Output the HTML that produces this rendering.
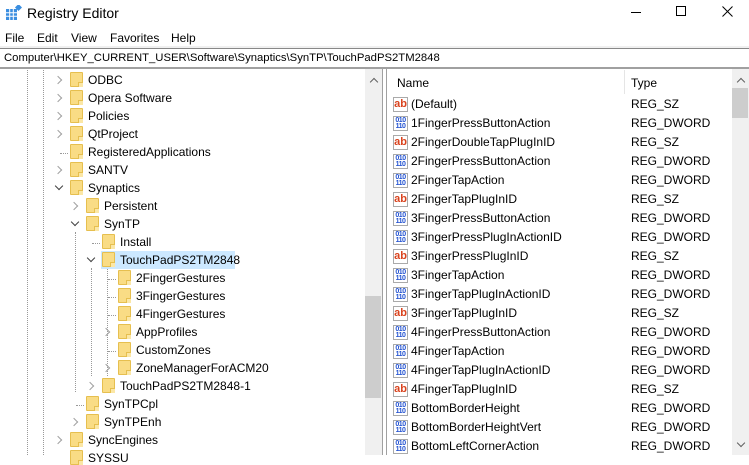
<!DOCTYPE html>
<html><head><style>
*{margin:0;padding:0;box-sizing:border-box}
body{width:749px;height:455px;overflow:hidden;background:#fff;font-family:"Liberation Sans",sans-serif;font-size:12px;color:#000;position:relative}
.a{position:absolute;white-space:nowrap}
.f{position:absolute;width:13px;height:15px;background:#f9dc85;border:1px solid #e6bf4f;border-radius:1px}
.f:after{content:"";position:absolute;right:-1px;bottom:-1px;width:4px;height:4px;border-left:1px solid #e6bf4f;border-top:1px solid #e6bf4f;background:#fbe7a6}
.ar{position:absolute;width:6px;height:6px;border-right:1px solid #a0a0a0;border-bottom:1px solid #a0a0a0;transform:rotate(-45deg)}
.dn{transform:rotate(45deg);border-color:#404040}
.vl{position:absolute;width:0;border-left:1px dotted #999}
.hl{position:absolute;height:0;border-top:1px dotted #999}
.ic{position:absolute;width:15px;height:15px;border:1px solid #aaa;background:#fff;font-size:9px;font-weight:bold;line-height:12px;text-align:center}
.ab{color:#d9431e;font-size:11px}
.dw{color:#2050d0;font-size:7px;line-height:6px;letter-spacing:-0.5px;padding-top:1px}
.r{margin-top:1px}
</style></head><body>
<svg class="a" style="left:6px;top:5px" width="16" height="16"><rect x="0" y="4" width="11" height="11" fill="#3a8ee0"/><path d="M0 7.7H11M0 11.3H11M3.7 4V15M7.3 4V15" stroke="#fff" stroke-width="1"/><rect x="10" y="0" width="5" height="5" fill="#3a8ee0" transform="rotate(45 12.5 2.5)"/></svg>
<div class="a" style="left:27px;top:5px;font-size:14px">Registry Editor</div>
<div class="a" style="left:631px;top:12px;width:10px;border-top:1px solid #000"></div>
<div class="a" style="left:676px;top:6px;width:10px;height:10px;border:1px solid #000"></div>
<svg class="a" style="left:722px;top:6px" width="11" height="11"><path d="M0.5 0.5L10.5 10.5M10.5 0.5L0.5 10.5" stroke="#000" stroke-width="1"/></svg>
<div class="a" style="left:5px;top:31px">File</div>
<div class="a" style="left:37px;top:31px">Edit</div>
<div class="a" style="left:71px;top:31px">View</div>
<div class="a" style="left:110px;top:31px">Favorites</div>
<div class="a" style="left:171px;top:31px">Help</div>
<div class="a" style="left:0;top:46px;width:749px;height:3px;background:#f0f0f0;border-bottom:1px solid #888"></div>
<div class="a" style="left:4px;top:52px;font-size:11.3px">Computer\HKEY_CURRENT_USER\Software\Synaptics\SynTP\TouchPadPS2TM2848</div>
<div class="a" style="left:0;top:67px;width:749px;height:2px;background:#a0a0a0"></div>
<div class="vl" style="left:27px;top:70px;height:385px"></div>
<div class="vl" style="left:43px;top:70px;height:385px"></div>
<div class="vl" style="left:75px;top:232px;height:160px"></div>
<div class="vl" style="left:91px;top:268px;height:108px"></div>
<div class="vl" style="left:107px;top:268px;height:108px"></div>
<div class="hl" style="left:60px;top:153px;width:8px"></div>
<div class="hl" style="left:92px;top:243px;width:8px"></div>
<div class="hl" style="left:76px;top:405px;width:8px"></div>
<div class="hl" style="left:108px;top:279px;width:8px"></div>
<div class="hl" style="left:108px;top:297px;width:8px"></div>
<div class="hl" style="left:108px;top:315px;width:8px"></div>
<div class="hl" style="left:108px;top:351px;width:8px"></div>
<div class="a" style="left:101px;top:251px;width:134px;height:18px;background:#cce8ff"></div>
<div style="position:absolute;left:0;top:1px;width:365px;height:455px">
<div class="ar" style="left:55px;top:76px"></div><div class="f" style="left:70px;top:71px"></div><div class="a" style="left:88px;top:72px">ODBC</div>
<div class="ar" style="left:55px;top:94px"></div><div class="f" style="left:70px;top:89px"></div><div class="a" style="left:88px;top:90px">Opera Software</div>
<div class="ar" style="left:55px;top:112px"></div><div class="f" style="left:70px;top:107px"></div><div class="a" style="left:88px;top:108px">Policies</div>
<div class="ar" style="left:55px;top:130px"></div><div class="f" style="left:70px;top:125px"></div><div class="a" style="left:88px;top:126px">QtProject</div>
<div class="f" style="left:70px;top:143px"></div><div class="a" style="left:88px;top:144px">RegisteredApplications</div>
<div class="ar" style="left:55px;top:166px"></div><div class="f" style="left:70px;top:161px"></div><div class="a" style="left:88px;top:162px">SANTV</div>
<div class="ar dn" style="left:56px;top:182px"></div><div class="f" style="left:70px;top:179px"></div><div class="a" style="left:88px;top:180px">Synaptics</div>
<div class="ar" style="left:71px;top:202px"></div><div class="f" style="left:86px;top:197px"></div><div class="a" style="left:104px;top:198px">Persistent</div>
<div class="ar dn" style="left:72px;top:218px"></div><div class="f" style="left:86px;top:215px"></div><div class="a" style="left:104px;top:216px">SynTP</div>
<div class="f" style="left:102px;top:233px"></div><div class="a" style="left:120px;top:234px">Install</div>
<div class="ar dn" style="left:88px;top:254px"></div><div class="f" style="left:102px;top:251px"></div><div class="a" style="left:120px;top:252px">TouchPadPS2TM2848</div>
<div class="f" style="left:118px;top:269px"></div><div class="a" style="left:136px;top:270px">2FingerGestures</div>
<div class="f" style="left:118px;top:287px"></div><div class="a" style="left:136px;top:288px">3FingerGestures</div>
<div class="f" style="left:118px;top:305px"></div><div class="a" style="left:136px;top:306px">4FingerGestures</div>
<div class="ar" style="left:103px;top:328px"></div><div class="f" style="left:118px;top:323px"></div><div class="a" style="left:136px;top:324px">AppProfiles</div>
<div class="f" style="left:118px;top:341px"></div><div class="a" style="left:136px;top:342px">CustomZones</div>
<div class="ar" style="left:103px;top:364px"></div><div class="f" style="left:118px;top:359px"></div><div class="a" style="left:136px;top:360px">ZoneManagerForACM20</div>
<div class="ar" style="left:87px;top:382px"></div><div class="f" style="left:102px;top:377px"></div><div class="a" style="left:120px;top:378px">TouchPadPS2TM2848-1</div>
<div class="f" style="left:86px;top:395px"></div><div class="a" style="left:104px;top:396px">SynTPCpl</div>
<div class="ar" style="left:71px;top:418px"></div><div class="f" style="left:86px;top:413px"></div><div class="a" style="left:104px;top:414px">SynTPEnh</div>
<div class="ar" style="left:55px;top:436px"></div><div class="f" style="left:70px;top:431px"></div><div class="a" style="left:88px;top:432px">SyncEngines</div>
<div class="f" style="left:70px;top:449px"></div><div class="a" style="left:88px;top:450px">SYSSU</div>
</div>
<div class="a" style="left:365px;top:69px;width:17px;height:386px;background:#f0f0f0"></div>
<div class="a" style="left:365px;top:296px;width:16px;height:102px;background:#cdcdcd"></div>
<div class="ar" style="left:371px;top:79px;transform:rotate(-135deg);border-color:#606060"></div>
<div class="a" style="left:382px;top:69px;width:1px;height:386px;background:#a0a0a0"></div>
<div class="a" style="left:386px;top:69px;width:1px;height:386px;background:#a0a0a0"></div>
<div class="a" style="left:397px;top:76px">Name</div>
<div class="a" style="left:624px;top:70px;width:1px;height:24px;background:#e5e5e5"></div>
<div class="a" style="left:631px;top:76px">Type</div>
<div class="a" style="left:732px;top:69px;width:17px;height:386px;background:#f0f0f0"></div>
<div class="a" style="left:732px;top:88px;width:16px;height:30px;background:#cdcdcd"></div>
<div class="ar" style="left:738px;top:79px;transform:rotate(-135deg);border-color:#606060"></div>
<div class="ar" style="left:738px;top:440px;transform:rotate(45deg);border-color:#606060"></div>
<div style="position:absolute;left:0;top:1px;width:732px;height:455px">
<div class="ic ab" style="left:393px;top:96px">ab</div><div class="a" style="left:411px;top:96px">(Default)</div><div class="a" style="left:631px;top:96px">REG_SZ</div>
<div class="ic dw" style="left:393px;top:115px">010<br>110</div><div class="a" style="left:411px;top:115px">1FingerPressButtonAction</div><div class="a" style="left:631px;top:115px">REG_DWORD</div>
<div class="ic ab" style="left:393px;top:134px">ab</div><div class="a" style="left:411px;top:134px">2FingerDoubleTapPlugInID</div><div class="a" style="left:631px;top:134px">REG_SZ</div>
<div class="ic dw" style="left:393px;top:153px">010<br>110</div><div class="a" style="left:411px;top:153px">2FingerPressButtonAction</div><div class="a" style="left:631px;top:153px">REG_DWORD</div>
<div class="ic dw" style="left:393px;top:172px">010<br>110</div><div class="a" style="left:411px;top:172px">2FingerTapAction</div><div class="a" style="left:631px;top:172px">REG_DWORD</div>
<div class="ic ab" style="left:393px;top:191px">ab</div><div class="a" style="left:411px;top:191px">2FingerTapPlugInID</div><div class="a" style="left:631px;top:191px">REG_SZ</div>
<div class="ic dw" style="left:393px;top:210px">010<br>110</div><div class="a" style="left:411px;top:210px">3FingerPressButtonAction</div><div class="a" style="left:631px;top:210px">REG_DWORD</div>
<div class="ic dw" style="left:393px;top:229px">010<br>110</div><div class="a" style="left:411px;top:229px">3FingerPressPlugInActionID</div><div class="a" style="left:631px;top:229px">REG_DWORD</div>
<div class="ic ab" style="left:393px;top:248px">ab</div><div class="a" style="left:411px;top:248px">3FingerPressPlugInID</div><div class="a" style="left:631px;top:248px">REG_SZ</div>
<div class="ic dw" style="left:393px;top:267px">010<br>110</div><div class="a" style="left:411px;top:267px">3FingerTapAction</div><div class="a" style="left:631px;top:267px">REG_DWORD</div>
<div class="ic dw" style="left:393px;top:286px">010<br>110</div><div class="a" style="left:411px;top:286px">3FingerTapPlugInActionID</div><div class="a" style="left:631px;top:286px">REG_DWORD</div>
<div class="ic ab" style="left:393px;top:305px">ab</div><div class="a" style="left:411px;top:305px">3FingerTapPlugInID</div><div class="a" style="left:631px;top:305px">REG_SZ</div>
<div class="ic dw" style="left:393px;top:324px">010<br>110</div><div class="a" style="left:411px;top:324px">4FingerPressButtonAction</div><div class="a" style="left:631px;top:324px">REG_DWORD</div>
<div class="ic dw" style="left:393px;top:343px">010<br>110</div><div class="a" style="left:411px;top:343px">4FingerTapAction</div><div class="a" style="left:631px;top:343px">REG_DWORD</div>
<div class="ic dw" style="left:393px;top:362px">010<br>110</div><div class="a" style="left:411px;top:362px">4FingerTapPlugInActionID</div><div class="a" style="left:631px;top:362px">REG_DWORD</div>
<div class="ic ab" style="left:393px;top:381px">ab</div><div class="a" style="left:411px;top:381px">4FingerTapPlugInID</div><div class="a" style="left:631px;top:381px">REG_SZ</div>
<div class="ic dw" style="left:393px;top:400px">010<br>110</div><div class="a" style="left:411px;top:400px">BottomBorderHeight</div><div class="a" style="left:631px;top:400px">REG_DWORD</div>
<div class="ic dw" style="left:393px;top:419px">010<br>110</div><div class="a" style="left:411px;top:419px">BottomBorderHeightVert</div><div class="a" style="left:631px;top:419px">REG_DWORD</div>
<div class="ic dw" style="left:393px;top:438px">010<br>110</div><div class="a" style="left:411px;top:438px">BottomLeftCornerAction</div><div class="a" style="left:631px;top:438px">REG_DWORD</div>
</div>
</body></html>
